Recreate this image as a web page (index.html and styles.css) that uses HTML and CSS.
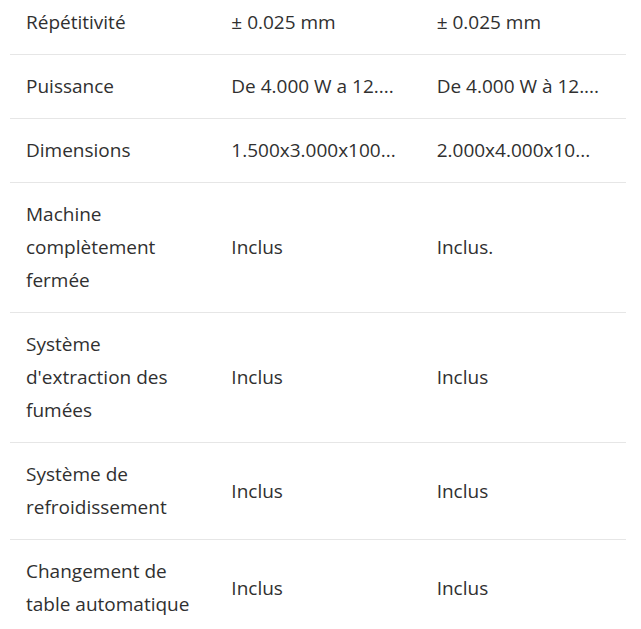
FILE: index.html
```html
<!DOCTYPE html>
<html lang="fr">
<head>
<meta charset="utf-8">
<link rel="stylesheet" href="styles.css">
</head>
<body>
<div class="wrap">
<table class="spec">
<tbody>
<tr><td>Répétitivité</td><td>± 0.025 mm</td><td>± 0.025 mm</td></tr>
<tr><td>Puissance</td><td>De 4.000 W a 12....</td><td>De 4.000 W à 12....</td></tr>
<tr><td>Dimensions</td><td>1.500x3.000x100...</td><td>2.000x4.000x10...</td></tr>
<tr><td>Machine complètement fermée</td><td>Inclus</td><td>Inclus.</td></tr>
<tr><td>Système d'extraction des fumées</td><td>Inclus</td><td>Inclus</td></tr>
<tr><td>Système de refroidissement</td><td>Inclus</td><td>Inclus</td></tr>
<tr><td>Changement de table automatique</td><td>Inclus</td><td>Inclus</td></tr>
</tbody>
</table>
</div>
</body>
</html>
```
FILE: styles.css
```css
html, body {
  margin: 0;
  padding: 0;
  background: #ffffff;
}
.wrap {
  padding: 0 15px 0 10px;
  margin-top: -9px;
}
.spec {
  width: 616px;
  border-collapse: collapse;
  table-layout: fixed;
  font-family: "Open Sans", "Liberation Sans", sans-serif;
  font-size: 19px;
  line-height: 33px;
  color: #303030;
}
.spec td {
  padding: 15px 20px 15px 16px;
  vertical-align: middle;
  border-top: 1px solid #e6e6e6;
}
.spec tr:first-child td {
  border-top: none;
}
.spec td + td {
  white-space: nowrap;
}
```
